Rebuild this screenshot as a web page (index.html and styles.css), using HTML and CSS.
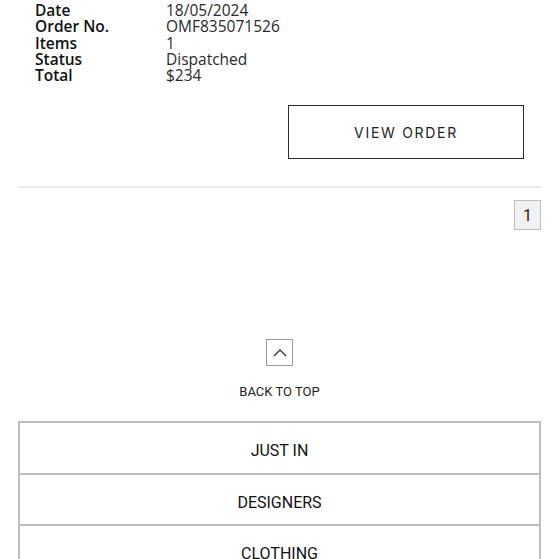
FILE: index.html
```html
<!DOCTYPE html>
<html>
<head>
<meta charset="utf-8">
<link rel="stylesheet" href="styles.css">
</head>
<body>
<div class="summary">
  <span class="lbl">Date</span><span class="val">18/05/2024</span>
  <span class="lbl">Order No.</span><span class="val">OMF835071526</span>
  <span class="lbl">Items</span><span class="val">1</span>
  <span class="lbl">Status</span><span class="val">Dispatched</span>
  <span class="lbl">Total</span><span class="val">$234</span>
</div>
<div class="actions">
  <a class="btn">VIEW ORDER</a>
</div>
<hr class="divider">
<div class="pager"><span class="page">1</span></div>
<div class="backtop">
  <span class="topbox">
    <svg width="14" height="10" viewBox="0 0 14 10"><path d="M1 8 L7 2 L13 8" fill="none" stroke="#333" stroke-width="1.3"/></svg>
  </span>
  <span class="toptext">BACK TO TOP</span>
</div>
<nav class="menu">
  <a class="item">JUST IN</a>
  <a class="item">DESIGNERS</a>
  <a class="item">CLOTHING</a>
</nav>
</body>
</html>
```
FILE: styles.css
```css
html, body { margin: 0; padding: 0; background: #fff; }
body { font-family: "Open Sans", sans-serif; color: #111; width: 559px; }
.summary {
  display: grid;
  grid-template-columns: 131px auto;
  padding: 2px 0 0 35px;
  font-size: 15.5px;
  line-height: 16.3px;
}
.lbl { font-weight: 600; color: #111; }
.val { font-weight: 400; color: #2a2a2a; }
.actions { display: flex; justify-content: flex-end; padding: 22px 35px 0 0; }
.btn {
  box-sizing: border-box;
  width: 236px; height: 54px;
  border: 1.5px solid #2a2a2a;
  display: flex; align-items: center; justify-content: center;
  font-family: Inter, sans-serif;
  font-size: 14px; letter-spacing: 1.7px; color: #222;
}
.divider { border: 0; height: 2px; background: #ebebeb; margin: 27px 18px 0; }
.pager { display: flex; justify-content: flex-end; padding: 12px 18px 0 0; }
.page {
  box-sizing: border-box;
  width: 27px; height: 30px;
  border: 1px solid #bdbdbd; background: #f1f1f1;
  display: flex; align-items: center; justify-content: center;
  font-family: Roboto, sans-serif; font-size: 16px; color: #222;
}
.backtop { display: flex; flex-direction: column; align-items: center; padding-top: 109px; }
.topbox {
  box-sizing: border-box; width: 27px; height: 27px;
  border: 1px solid #9a9a9a;
  display: flex; align-items: center; justify-content: center;
}
.toptext { margin-top: 18px; font-family: Roboto, sans-serif; font-size: 13px; color: #222; }
.menu {
  margin: 22px 18px 0;
  border: 2px solid #bdbdbd;
  border-bottom: 0;
}
.item {
  box-sizing: border-box;
  display: flex; align-items: center; justify-content: center;
  height: 51.5px;
  padding-top: 5px;
  border-bottom: 2px solid #bdbdbd;
  font-family: Roboto, sans-serif; font-size: 16px; color: #111;
}
```
